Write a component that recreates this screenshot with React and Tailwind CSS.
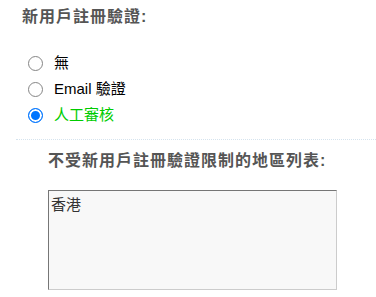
import { useState } from "react";

const options = [
  { id: "none", label: "無" },
  { id: "email", label: "Email 驗證" },
  { id: "manual", label: "人工審核" },
];

const cjk = "font-['Liberation_Sans','Noto_Sans_CJK_TC',sans-serif]";

export default function App() {
  const [mode, setMode] = useState("manual");

  return (
    <div className={`w-[376px] h-[297px] overflow-hidden bg-white ${cjk}`}>
      <div className="pl-[22px] pt-[8px]">
        <h3 className="text-[16px] leading-[18px] font-bold tracking-[1px] text-[#555]">
          新用戶註冊驗證:
        </h3>
        <div className="mt-[24px] flex flex-col">
          {options.map((o) => (
            <label key={o.id} className="flex items-center h-[26px] cursor-pointer">
              <input
                type="radio"
                name="verify"
                checked={mode === o.id}
                onChange={() => setMode(o.id)}
                className="appearance-none ml-[6px] w-[15px] h-[15px] m-0 rounded-full border-[1.5px] border-[#858585] bg-white checked:border-[#0075ff] checked:bg-[#0075ff] checked:shadow-[inset_0_0_0_2px_white]"
              />
              <span
                className={`ml-[11px] text-[15px] ${
                  mode === o.id && o.id === "manual" ? "text-[#00cc00]" : "text-black"
                }`}
              >
                {o.label}
              </span>
            </label>
          ))}
        </div>
      </div>
      <div className="ml-[16px] mt-[11px] border-t border-dotted border-[#d5e3ee]" />
      <div className="pl-[48px] pt-[12px]">
        <h3 className="text-[16px] leading-[18px] font-bold tracking-[1px] text-[#555]">
          不受新用戶註冊驗證限制的地區列表:
        </h3>
        <textarea
          defaultValue="香港"
          className="mt-[20px] block w-[289px] h-[100px] resize-none bg-[#f8f8f8] text-[15px] leading-[20px] text-[#333] px-[2px] pt-[4px] border border-t-[#767676] border-l-[#767676] border-r-[#cccccc] border-b-[#cccccc] outline-none"
        />
      </div>
    </div>
  );
}
